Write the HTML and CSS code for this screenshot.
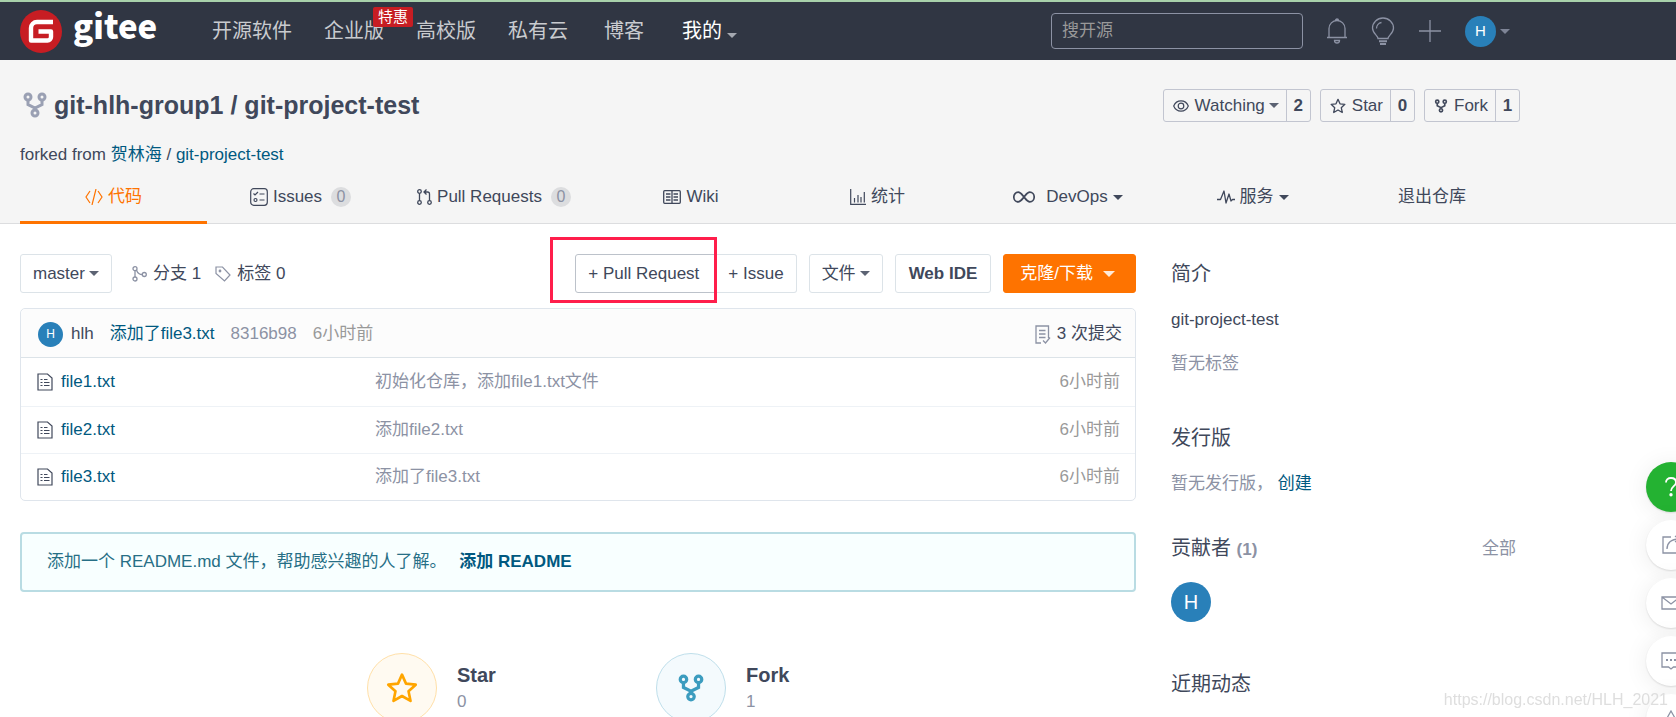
FILE: index.html
```html
<!DOCTYPE html>
<html lang="zh-CN">
<head>
<meta charset="utf-8">
<title>git-hlh-group1/git-project-test - Gitee</title>
<link rel="stylesheet" href="styles.css">
</head>
<body>
<svg class="defs" aria-hidden="true">
  <symbol id="fork" viewBox="0 0 24 26"><g fill="none" stroke="currentColor" stroke-width="3"><circle cx="5" cy="5" r="3"/><circle cx="19" cy="5" r="3"/><circle cx="12" cy="21" r="3"/><path d="M5 8v4.500l7 3.500 7-3.500V8M12 16v2"/></g></symbol>
  <symbol id="star" viewBox="0 0 24 24"><path fill="none" stroke="currentColor" stroke-width="2" stroke-linejoin="round" d="M12 2l3 6.700 7.300.8-5.400 5 1.500 7.200L12 18l-6.400 3.700 1.500-7.200-5.400-5L9 8.700z"/></symbol>
  <symbol id="file" viewBox="0 0 16 18"><path fill="none" stroke="currentColor" stroke-width="1.200" d="M1 1h9.500L15 5v12H1z"/><path stroke="currentColor" stroke-width="1.200" d="M3.500 6.500h2M7 6.500h3.500M3.500 9.500h2M7 9.500h5.500M3.500 12.500h2M7 12.500h5.500"/></symbol>
</svg>

<header class="topbar">
  <div class="container topbar-inner">
    <a class="logo" href="#">
      <svg width="42" height="43" viewBox="0 0 42 43"><ellipse cx="21" cy="21.500" rx="21" ry="21.500" fill="#c71d23"/><path d="M33 12H17a6 6 0 0 0-6 6v12.500h16.500a3.500 3.500 0 0 0 3.500-3.500v-5.500H18.500" fill="none" stroke="#fff" stroke-width="4.400" stroke-linejoin="round"/></svg>
      <span>gitee</span>
    </a>
    <nav class="mainnav">
      <a href="#">开源软件</a>
      <a href="#">企业版<span class="promo">特惠</span></a>
      <a href="#">高校版</a>
      <a href="#">私有云</a>
      <a class="blog" href="#">博客</a>
      <a class="mine" href="#">我的<i class="caret"></i></a>
    </nav>
    <div class="tools">
      <input class="search" type="text" placeholder="搜开源" aria-label="搜开源">
      <a href="#" aria-label="通知"><svg width="20" height="26" viewBox="0 0 20 26" fill="none" stroke="currentColor" stroke-width="1.300"><path d="M0 19.500h20M2 19.500V10.500a8 8 0 0 1 16 0v9M8.500 2.500a1.500 1.500 0 0 1 3 0M7.500 22.500a2.500 2.500 0 0 0 5 0z"/></svg></a>
      <a href="#" aria-label="灵感"><svg width="24" height="28" viewBox="0 0 24 28" fill="none" stroke="currentColor" stroke-width="1.300"><path d="M7 21.500c0-3-5.500-5-5.500-10.500a10.500 10 0 0 1 21 0c0 5.500-5.500 7.500-5.500 10.500zM5.500 11.500a6 6 0 0 1 5-6"/><path stroke-width="2" d="M8 24.200h8M9 27h6"/></svg></a>
      <a href="#" aria-label="新建"><svg width="22" height="22" viewBox="0 0 22 22" fill="none" stroke="currentColor" stroke-width="1.300"><path d="M0 11h22M11 0v22"/></svg></a>
      <a class="user" href="#"><span class="avatar avatar-nav">H</span><i class="caret"></i></a>
    </div>
  </div>
</header>

<section class="repo-head">
  <div class="container">
    <div class="title-row">
      <h1><svg width="24" height="26"><use href="#fork"/></svg><a href="#">git-hlh-group1</a> / <a href="#">git-project-test</a></h1>
      <div class="counters">
        <div class="counter"><button type="button"><svg width="16" height="12" viewBox="0 0 16 12" fill="none" stroke="currentColor" stroke-width="1.200"><path d="M.7 6C3.500-.8 12.500-.8 15.300 6 12.500 12.800 3.500 12.800.7 6z"/><circle cx="8" cy="6" r="2.800"/></svg>Watching<i class="caret"></i></button><a href="#">2</a></div>
        <div class="counter"><button type="button"><svg width="16" height="16"><use href="#star"/></svg>Star</button><a href="#">0</a></div>
        <div class="counter"><button type="button"><svg width="14" height="14"><use href="#fork"/></svg>Fork</button><a href="#">1</a></div>
      </div>
    </div>
    <p class="forked">forked from <a href="#">贺林海</a> / <a href="#">git-project-test</a></p>
    <nav class="tabs">
      <a class="active" href="#"><svg width="18" height="16" viewBox="0 0 18 16" fill="none" stroke="currentColor" stroke-width="1.200"><path d="M5 2L1 8l4 6M13 2l4 6-4 6M11 0L7 16"/></svg>代码</a>
      <a href="#"><svg width="18" height="18" viewBox="0 0 18 18" fill="none" stroke="currentColor" stroke-width="1.200"><rect x=".7" y=".7" width="16.600" height="16.600" rx="3"/><path d="M3.500 5.500l1.500 1.500 3-3M9.500 6h5M9.500 12h5"/><circle cx="5.500" cy="12" r="1.500"/></svg>Issues<b>0</b></a>
      <a href="#"><svg width="15" height="16" viewBox="0 0 15 16" fill="none" stroke="currentColor" stroke-width="1.300"><circle cx="2.500" cy="2.500" r="1.800"/><circle cx="2.500" cy="13.500" r="1.800"/><circle cx="12.500" cy="13.500" r="1.800"/><path d="M2.500 4.300v7.400M12.500 11.700V5a2 2 0 0 0-2-2H7M9.500.5L7 3l2.500 2.500"/></svg>Pull Requests<b>0</b></a>
      <a href="#"><svg width="18" height="14" viewBox="0 0 18 14" fill="none" stroke="currentColor" stroke-width="1.300"><rect x=".7" y=".7" width="16.600" height="12.600" rx="1"/><path d="M9 1v12M3 4h4.500M3 7h4.500M3 10h4.500M10.500 4H15M10.500 7H15M10.500 10H15"/></svg>Wiki</a>
      <a href="#"><svg width="16" height="16" viewBox="0 0 16 16" fill="none" stroke="currentColor" stroke-width="1.200"><path d="M.7 0v15.300H16M4.500 13.500V9M8 13.500V6M11 13.500V8M14.300 13.500V3"/></svg>统计</a>
      <a href="#"><svg class="devops" width="22" height="12" viewBox="0 0 22 12" fill="none" stroke="currentColor" stroke-width="1.700"><path d="M11 6C8.500 3 7.500 1.200 5.200 1.200a4.400 4.800 0 0 0 0 9.600C7.500 10.800 8.500 9 11 6s3.500-4.800 5.800-4.800a4.400 4.800 0 0 1 0 9.600C14.500 10.800 13.500 9 11 6z"/></svg>DevOps<i class="caret"></i></a>
      <a href="#"><svg width="18" height="14" viewBox="0 0 18 14" fill="none" stroke="currentColor" stroke-width="1.300" stroke-linejoin="round"><path d="M0 9.500h3.500L7 1l2 12 3-9 2 7 1.500-1.500H18"/></svg>服务<i class="caret"></i></a>
      <a href="#">退出仓库</a>
    </nav>
  </div>
</section>

<main class="container layout">
  <div class="content">
    <div class="toolbar">
      <button class="btn" type="button">master<i class="caret"></i></button>
      <a class="meta" href="#"><svg width="15" height="16" viewBox="0 0 15 16" fill="none" stroke="currentColor" stroke-width="1.300"><circle cx="3" cy="2.700" r="2"/><circle cx="3" cy="13" r="2"/><circle cx="12.300" cy="8.500" r="2"/><path d="M3 4.700V11M4.500 4.200c1 2.500 3 4.300 5.800 4.300"/></svg>分支 1</a>
      <a class="meta" href="#"><svg width="16" height="16" viewBox="0 0 16 16" fill="none" stroke="currentColor" stroke-width="1.200"><path d="M1 1h6.500L15 9l-5.500 6L1 7.500z"/><circle cx="5" cy="5" r=".8"/></svg>标签 0</a>
      <div class="actions">
        <div class="pair">
          <button class="btn strong" type="button">+ Pull Request</button><button class="btn" type="button">+ Issue</button>
          <span class="highlight"></span>
        </div>
        <button class="btn" type="button">文件<i class="caret"></i></button>
        <button class="btn bold" type="button">Web IDE</button>
        <button class="btn primary" type="button">克隆/下载<i class="caret"></i></button>
      </div>
    </div>

    <section class="files">
      <div class="commit">
        <span class="avatar avatar-small">H</span><a class="author" href="#">hlh</a>
        <a class="link" href="#">添加了file3.txt</a><a class="hash" href="#">8316b98</a><span class="time">6小时前</span>
        <a class="total" href="#"><svg width="16" height="19" viewBox="0 0 16 19" fill="none" stroke="#8c92a4" stroke-width="1.300"><path d="M6 18H1V1h12.500v12M4 5.500h6.500M4 9h6.500M4 12.500h6.500M8 15.500l2.500 2.500L15 12.500"/></svg>3 次提交</a>
      </div>
      <table>
        <tr><td class="name"><svg width="16" height="18"><use href="#file"/></svg><a href="#">file1.txt</a></td><td class="msg">初始化仓库，添加file1.txt文件</td><td class="time">6小时前</td></tr>
        <tr><td class="name"><svg width="16" height="18"><use href="#file"/></svg><a href="#">file2.txt</a></td><td class="msg">添加file2.txt</td><td class="time">6小时前</td></tr>
        <tr><td class="name"><svg width="16" height="18"><use href="#file"/></svg><a href="#">file3.txt</a></td><td class="msg">添加了file3.txt</td><td class="time">6小时前</td></tr>
      </table>
    </section>

    <div class="readme">添加一个 README.md 文件，帮助感兴趣的人了解。 <a href="#">添加 README</a></div>

    <div class="stats">
      <div class="stat"><span class="disc gold"><svg width="32" height="32"><use href="#star"/></svg></span><div><h3>Star</h3><p>0</p></div></div>
      <div class="stat"><span class="disc blue"><svg width="26" height="28"><use href="#fork"/></svg></span><div><h3>Fork</h3><p>1</p></div></div>
    </div>
  </div>

  <aside class="side">
    <section class="roomy"><h2>简介</h2><p>git-project-test</p><p class="muted">暂无标签</p></section>
    <section><h2>发行版</h2><p class="muted">暂无发行版， <a href="#">创建</a></p></section>
    <section class="roomy"><div class="side-head"><h2>贡献者 <small>(1)</small></h2><a href="#">全部</a></div><span class="avatar avatar-large">H</span></section>
    <section><h2>近期动态</h2></section>
  </aside>
</main>

<div class="floaters">
  <button class="help" type="button" aria-label="帮助"><svg width="18" height="22" viewBox="0 0 18 22" fill="none" stroke="currentColor" stroke-width="1.800"><path d="M4 6.500C4 3.500 6 2 9 2s5 1.700 5 4.400C14 10 9 10.500 9 15"/><circle cx="9" cy="18.800" r=".8" fill="currentColor"/></svg></button>
  <button type="button" aria-label="分享"><svg width="20" height="20" viewBox="0 0 20 20" fill="none" stroke="currentColor" stroke-width="1.300"><path d="M10 2H2v16h16v-7M6 14C6 8 10 4 18 4M14 1l4 3-4 3"/></svg></button>
  <button type="button" aria-label="邮件"><svg width="20" height="14" viewBox="0 0 20 14" fill="none" stroke="currentColor" stroke-width="1.300"><path d="M1 1h18v12H1zM1 1l9 7 9-7"/></svg></button>
  <button type="button" aria-label="反馈"><svg width="20" height="18" viewBox="0 0 20 18" fill="none" stroke="currentColor" stroke-width="1.300"><path d="M1 1h18v14h-6.500L10 17l-2.500-2H1z"/><path stroke-width="2" d="M5 8h2M9 8h2M13 8h2"/></svg></button>
  <button type="button" aria-label="举报"><svg width="20" height="18" viewBox="0 0 20 18" fill="none" stroke="currentColor" stroke-width="1.300"><path d="M10 1l9 16H1zM10 7v5M10 14v1"/></svg></button>
</div>
<div class="watermark">https://blog.csdn.net/HLH_2021</div>
</body>
</html>
```

FILE: styles.css
```css
* { box-sizing: border-box; }
html { height: 100%; overflow: hidden; }
body { margin: 0; height: 100%; overflow: hidden; background: #fff; color: #40485b; font: 17px/24px "Liberation Sans", "Noto Sans CJK SC", sans-serif; }
a { color: inherit; text-decoration: none; }
h1, h2, h3, p { margin: 0; }
button, input { font: inherit; color: inherit; }
svg { flex: none; }
.defs { position: absolute; width: 0; height: 0; }
.container { max-width: 1520px; padding-left: 20px; }
.caret { display: inline-block; flex: none; border: 5px solid transparent; border-top-color: currentColor; border-bottom: 0; margin-left: 4px; opacity: 0.85; }

.topbar { height: 60px; border-top: 2px solid #a8d1ab; background: #303643; color: #8c92a4; }
.topbar-inner { display: flex; align-items: center; height: 58px; }
.logo { display: flex; align-items: center; gap: 11px; width: 192px; color: #fff; font: 900 33px/42px "Noto Sans CJK SC", sans-serif; }
.logo span { margin-top: -12px; }
.mainnav { display: flex; gap: 32px; font-size: 20px; color: #c9cbcf; }
.mainnav a { position: relative; }
.mainnav .blog { margin-left: 4px; }
.mainnav .mine { color: #fff; margin-left: 6px; }
.mainnav .caret { margin-left: 5px; color: #b9bcc3; }
.promo { position: absolute; left: 49px; top: -12px; padding: 0 5px; border-radius: 2px; background: #c71d23; color: #fff; font-size: 15px; line-height: 20px; white-space: nowrap; }
.tools { display: flex; align-items: center; gap: 24px; margin-left: auto; padding-right: 10px; }
.tools a { display: flex; align-items: center; }
.search { width: 252px; height: 36px; padding: 0 10px; border: 1px solid #8c92a4; border-radius: 4px; background: transparent; }
.search::placeholder { color: #999; opacity: 1; }
.avatar { display: inline-flex; flex: none; align-items: center; justify-content: center; border-radius: 50%; background: #2980b9; color: #fff; }
.avatar-nav { width: 31px; height: 31px; font-size: 15px; }
.avatar-small { width: 25px; height: 25px; font-size: 12px; }
.avatar-large { width: 40px; height: 40px; font-size: 20px; }

.repo-head { background: #f5f5f5; border-bottom: 1px solid #dcdddf; }
.title-row { display: flex; align-items: center; justify-content: space-between; padding-top: 29px; }
h1 { display: flex; align-items: center; gap: 7px; padding: 0 0 2px 3px; font-size: 25px; line-height: 30px; }
h1 svg { color: #9aa0b3; }
.counters { display: flex; gap: 9px; }
.counter { display: flex; height: 33px; border: 1px solid #c2c5d0; border-radius: 3px; }
.counter button { display: flex; align-items: center; gap: 6px; padding: 0 7px 0 9px; border: 0; background: none; }
.counter .caret { margin-left: -2px; }
.counter a { min-width: 24px; border-left: 1px solid #c2c5d0; font-weight: 700; line-height: 31px; text-align: center; }
.forked { padding-top: 21px; }
.forked a { color: #005980; }
.tabs { display: grid; grid-template-columns: 187fr 187fr 200fr 186fr 187fr 194fr 175fr 184fr; margin-top: 2px; }
.tabs a { display: flex; align-items: center; justify-content: center; gap: 5px; height: 55px; padding-top: 4px; border-bottom: 3px solid transparent; margin-bottom: -1px; }
.tabs .active { color: #fe7300; border-color: #fe7300; }
.tabs b { min-width: 20px; height: 20px; margin-left: 4px; border-radius: 10px; background: #dcdddf; color: #8c92a4; font-size: 16px; font-weight: 400; line-height: 20px; text-align: center; }
.tabs .caret { margin-left: 0; opacity: 1; }
.tabs .devops { margin-right: 6px; }
.tabs a:nth-child(n+4) { padding-left: 8px; }

.layout { display: grid; grid-template-columns: minmax(0, 1116fr) minmax(0, 349fr); gap: 35px; padding-top: 30px; }
.toolbar { display: flex; align-items: center; }
.btn { display: inline-flex; align-items: center; justify-content: center; height: 39px; padding: 0 12px; border: 1px solid #dce3e8; border-radius: 3px; background: #fff; white-space: nowrap; }
.bold { font-weight: 700; padding: 0 13px; }
.primary { border-color: #fe7300; background: #fe7300; color: #fff; padding: 0 20px 0 16px; }
.primary .caret { border-width: 6px; border-bottom: 0; margin-left: 10px; }
.meta { display: flex; align-items: center; gap: 6px; margin-left: 14px; }
.meta svg { color: #8c92a4; }
.btn + .meta { margin-left: 20px; }
.actions { display: flex; gap: 12px; margin-left: auto; }
.pair { display: flex; position: relative; }
.pair .btn + .btn { padding: 0 12px; border-left: 0; border-radius: 0 3px 3px 0; }
.pair .strong { border-color: #bcc2ca; padding: 0 16px 0 12px; border-radius: 3px 0 0 3px; }
.highlight { position: absolute; left: -25px; top: -17px; width: 167px; height: 66px; border: 3px solid #ff1e4b; pointer-events: none; }
.files { margin-top: 15px; border: 1px solid #dfe5ec; border-radius: 5px; }
.commit { display: flex; align-items: center; gap: 16px; height: 49px; padding: 2px 13px 0 17px; background: #fcfcfc; border-bottom: 1px solid #dce3e8; border-radius: 5px 5px 0 0; }
.author { margin-left: -8px; }
.link, .name a, .side p a { color: #005980; }
.hash, .msg, .muted { color: #8c92a4; }
.time { color: #999; }
.total { display: flex; align-items: center; gap: 6px; margin-left: auto; }
table { width: 100%; border-collapse: collapse; table-layout: fixed; }
td { height: 47px; padding: 0; }
tr:first-child td { height: 48px; }
tr + tr td { border-top: 1px solid #eef2f6; }
.name { width: 354px; padding-left: 16px; }
.name svg { vertical-align: middle; margin-right: 8px; }
td.time { width: 100px; padding-right: 15px; text-align: right; }
.readme { margin-top: 31px; padding: 16px 25px; border: 2px solid #b9dce3; border-radius: 4px; background: #f8ffff; color: #276f86; }
.readme a { margin-left: 8px; color: #005980; font-weight: 700; }
.stats { display: flex; justify-content: center; padding-top: 61px; }
.stat { display: flex; align-items: center; gap: 20px; width: 289px; }
.stat:first-child { margin-left: 156px; }
.disc { display: flex; align-items: center; justify-content: center; width: 70px; height: 70px; border: 1px solid; border-radius: 50%; }
.gold { border-color: #ffe0a8; background: #fffaf1; color: #ffa500; }
.blue { border-color: #bfdfeb; background: #f4fafd; color: #3c9cbf; }
h3 { font-size: 20px; line-height: 28px; }
.stat p { color: #8c92a4; line-height: 26px; }
.side { padding-top: 1px; }
.side section + section { margin-top: 33px; }
.side .roomy { padding-bottom: 10px; }
h2 { font-size: 20px; font-weight: 400; line-height: 38px; }
h2 small { font-size: 17px; font-weight: 700; color: #8c92a4; }
.side p { margin-top: 15px; }
.side p + p { margin-top: 20px; }
.side-head { display: flex; justify-content: space-between; align-items: center; margin: 0 4px 13px 0; }
.side-head > a { color: #8c92a4; }

.floaters { position: fixed; right: -20px; top: 462px; display: flex; flex-direction: column; gap: 8px; }
.floaters button { display: flex; align-items: center; justify-content: center; width: 50px; height: 50px; padding: 0; border: 0; border-radius: 50%; background: #fff; color: #8c92a4; box-shadow: 0 1px 2px rgba(0, 0, 0, 0.12), 0 2px 24px rgba(0, 0, 0, 0.08); }
.floaters .help { background: #24b232; color: #fff; }
.watermark { position: fixed; right: 8px; bottom: 5px; color: #dedede; font-size: 16px; }
```
